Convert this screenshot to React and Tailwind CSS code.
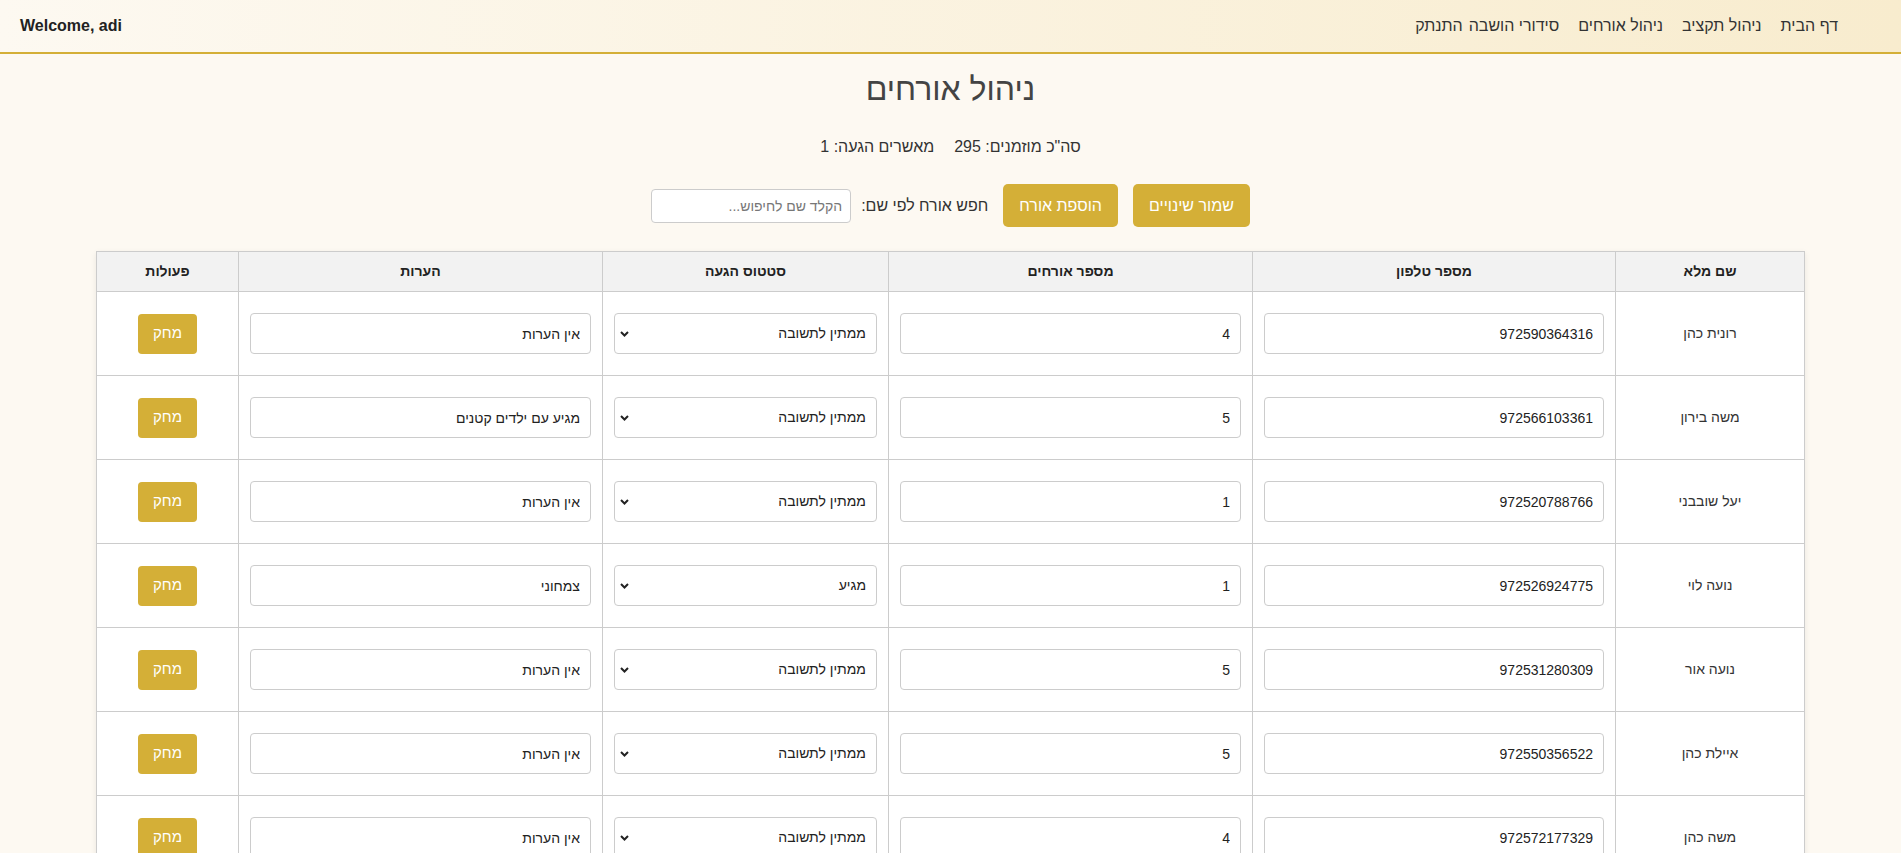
import React from 'react';

const guests = [
  { name: 'רונית כהן', phone: '972590364316', count: 4, status: 'ממתין לתשובה', notes: 'אין הערות' },
  { name: 'משה בירון', phone: '972566103361', count: 5, status: 'ממתין לתשובה', notes: 'מגיע עם ילדים קטנים' },
  { name: 'יעל שובבני', phone: '972520788766', count: 1, status: 'ממתין לתשובה', notes: 'אין הערות' },
  { name: 'נועה לוי', phone: '972526924775', count: 1, status: 'מגיע', notes: 'צמחוני' },
  { name: 'נועה אור', phone: '972531280309', count: 5, status: 'ממתין לתשובה', notes: 'אין הערות' },
  { name: 'איילת כהן', phone: '972550356522', count: 5, status: 'ממתין לתשובה', notes: 'אין הערות' },
  { name: 'משה כהן', phone: '972572177329', count: 4, status: 'ממתין לתשובה', notes: 'אין הערות' },
];

const navLinks = ['דף הבית', 'ניהול תקציב', 'ניהול אורחים', 'סידורי הושבה'];

const fieldClass =
  'w-full h-[41px] px-[10px] bg-white border border-[#cccccc] rounded-[4px] text-[14px] text-[#222] outline-none';

const Header = () => (
  <header className="flex items-center justify-between h-[54px] pr-[63px] pl-5 border-b-2 border-[#d4af37] bg-gradient-to-l from-[#f8ecce] to-[#fdf9f1]">
    <nav className="flex items-center gap-[6px] text-[16px] text-[#333]">
      <div className="flex items-center gap-[19px]">
        {navLinks.map((link) => (
          <a key={link} href="#" className="hover:underline">
            {link}
          </a>
        ))}
      </div>
      <button className="text-[16px] text-[#333]">התנתק</button>
    </nav>
    <span className="text-[16px] font-bold text-[#222]" dir="ltr">
      Welcome, adi
    </span>
  </header>
);

const StatusSelect = ({ value }) => (
  <div className="relative">
    <select defaultValue={value} className={`${fieldClass} appearance-none pl-8`}>
      <option>ממתין לתשובה</option>
      <option>מגיע</option>
      <option>לא מגיע</option>
    </select>
    {/* chevron */}
    <svg
      className="pointer-events-none absolute left-[6px] top-1/2 -translate-y-1/2"
      width="9"
      height="6"
      viewBox="0 0 9 6"
    >
      <polyline points="1,1 4.5,4.5 8,1" fill="none" stroke="#222" strokeWidth="2" />
    </svg>
  </div>
);

export default function App() {
  return (
    <div dir="rtl" className="min-h-screen bg-[#fdf9f2] font-['Liberation_Sans','Open_Sans',sans-serif] text-[#333]">
      <Header />

      <main className="pb-10">
        <h1 className="mt-4 text-center text-[32px] leading-[38px] text-[#444]">ניהול אורחים</h1>

        <div className="mt-[27px] flex justify-center gap-5 text-[16px] leading-6 text-[#333]">
          <span>סה"כ מוזמנים: 295</span>
          <span>מאשרים הגעה: 1</span>
        </div>

        <div className="mt-[25px] flex items-center justify-center gap-[15px]">
          <button className="h-[43px] px-4 rounded-[5px] bg-[#d4af37] text-white text-[16px]">שמור שינויים</button>
          <button className="h-[43px] px-4 rounded-[5px] bg-[#d4af37] text-white text-[16px]">הוספת אורח</button>
          <div className="flex items-center gap-[10px]">
            <label className="text-[16px] text-[#333]">חפש אורח לפי שם:</label>
            <input
              type="text"
              placeholder="הקלד שם לחיפוש..."
              className="w-[200px] h-[34px] px-2 bg-white border border-[#cccccc] rounded-[4px] text-[14px] placeholder:text-[#777] outline-none"
            />
          </div>
        </div>

        <table className="mt-6 mx-auto w-[1708px] table-fixed border-collapse bg-white shadow-[0_2px_6px_rgba(0,0,0,0.08)] text-[14px]">
          <colgroup>
            <col className="w-[189px]" />
            <col className="w-[363px]" />
            <col className="w-[364px]" />
            <col className="w-[286px]" />
            <col className="w-[364px]" />
            <col className="w-[142px]" />
          </colgroup>
          <thead>
            <tr className="h-[40px] bg-[#f2f2f2] text-[#222]">
              {['שם מלא', 'מספר טלפון', 'מספר אורחים', 'סטטוס הגעה', 'הערות', 'פעולות'].map((h) => (
                <th key={h} className="border border-[#cccccc] font-bold text-center">
                  {h}
                </th>
              ))}
            </tr>
          </thead>
          <tbody>
            {guests.map((g) => (
              <tr key={g.phone} className="h-[84px]">
                <td className="border border-[#cccccc] text-center text-[#333]">{g.name}</td>
                <td className="border border-[#cccccc] px-[11px]">
                  <input type="text" defaultValue={g.phone} className={fieldClass} />
                </td>
                <td className="border border-[#cccccc] px-[11px]">
                  <input type="text" defaultValue={g.count} className={fieldClass} />
                </td>
                <td className="border border-[#cccccc] px-[11px]">
                  <StatusSelect value={g.status} />
                </td>
                <td className="border border-[#cccccc] px-[11px]">
                  <input type="text" defaultValue={g.notes} className={fieldClass} />
                </td>
                <td className="border border-[#cccccc] text-center">
                  <button className="w-[59px] h-[40px] rounded-[4px] bg-[#d4af37] text-white text-[15px]">מחק</button>
                </td>
              </tr>
            ))}
          </tbody>
        </table>
      </main>
    </div>
  );
}
